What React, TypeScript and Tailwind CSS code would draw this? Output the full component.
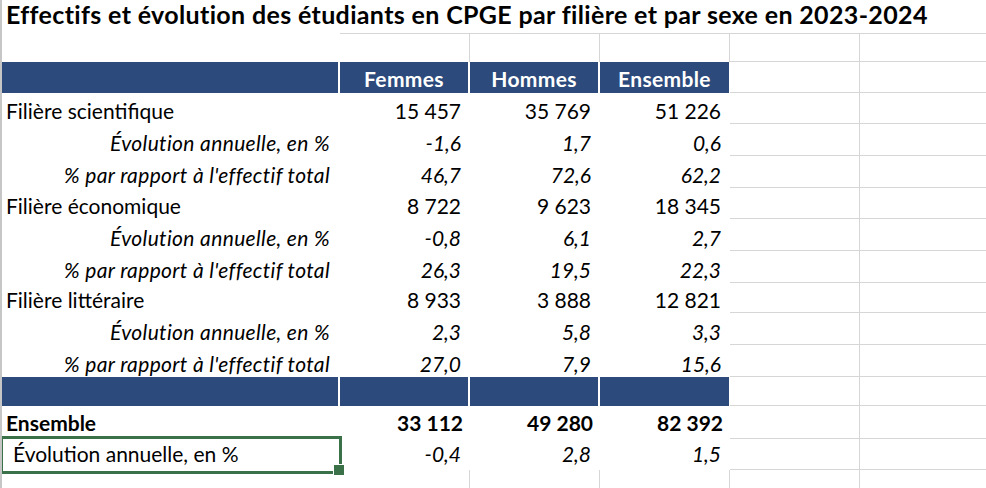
import React from "react";

type Line = {
  label: string;
  kind: "main" | "sub";
  vals: string[];
  h: string;
};

const lines: Line[] = [
  { label: "Filière scientifique", kind: "main", vals: ["15 457", "35 769", "51 226"], h: "h-[31px]" },
  { label: "Évolution annuelle, en %", kind: "sub", vals: ["-1,6", "1,7", "0,6"], h: "h-[32px]" },
  { label: "% par rapport à l'effectif total", kind: "sub", vals: ["46,7", "72,6", "62,2"], h: "h-[32px]" },
  { label: "Filière économique", kind: "main", vals: ["8 722", "9 623", "18 345"], h: "h-[31px]" },
  { label: "Évolution annuelle, en %", kind: "sub", vals: ["-0,8", "6,1", "2,7"], h: "h-[32px]" },
  { label: "% par rapport à l'effectif total", kind: "sub", vals: ["26,3", "19,5", "22,3"], h: "h-[32px]" },
  { label: "Filière littéraire", kind: "main", vals: ["8 933", "3 888", "12 821"], h: "h-[30px]" },
  { label: "Évolution annuelle, en %", kind: "sub", vals: ["2,3", "5,8", "3,3"], h: "h-[32px]" },
  { label: "% par rapport à l'effectif total", kind: "sub", vals: ["27,0", "7,9", "15,6"], h: "h-[32px]" },
];

const numW = ["w-[130px]", "w-[130px]", "w-[130px]"];

// empty sheet columns on the right (E, F)
function Spare({ top = false }: { top?: boolean }): React.JSX.Element {
  return (
    <>
      <div className={`w-[130px] h-full border-b border-r border-[#d6d6d6] ${top ? "border-t" : ""}`}></div>
      <div className={`flex-1 h-full border-b border-[#d6d6d6] ${top ? "border-t" : ""}`}></div>
    </>
  );
}

function BlueRow({ h, heads }: { h: string; heads?: string[] }): React.JSX.Element {
  return (
    <div className={`flex ${h}`}>
      <div className="w-[338px] h-full bg-[#2c4a7b] border-r-2 border-white"></div>
      {numW.map((w, i) => (
        <div
          key={i}
          className={`${w} h-full bg-[#2c4a7b] ${i < 2 ? "border-r-2" : "border-r"} border-white flex items-end justify-center pb-[2px] text-white font-bold leading-[24px] tracking-[0.35px]`}
        >
          {heads ? heads[i] : ""}
        </div>
      ))}
      <Spare />
    </div>
  );
}

export default function App(): React.JSX.Element {
  return (
    <div className="w-[986px] h-[488px] overflow-hidden bg-white border-l-2 border-[#c6c6c6] text-[21px] text-black font-['Lato',sans-serif]">
      {/* Title */}
      <div className="h-[33px] pl-[4px] text-[25px] font-bold leading-[28px] tracking-[0.35px] whitespace-nowrap">
        Effectifs et évolution des étudiants en CPGE par filière et par sexe en 2023-2024
      </div>

      {/* Empty row */}
      <div className="flex h-[29px]">
        <div className="w-[338px] h-full"></div>
        {numW.map((w, i) => (
          <div key={i} className={`${w} h-full border-t border-r border-[#d6d6d6]`}></div>
        ))}
        <Spare top />
      </div>

      <BlueRow h="h-[31px]" heads={["Femmes", "Hommes", "Ensemble"]} />

      {lines.map((l, idx) => (
        <div key={idx} className={`flex ${l.h}`}>
          <div
            className={`w-[338px] h-full flex items-end pb-[1px] leading-[24px] whitespace-nowrap ${
              l.kind === "main" ? "pl-[4px]" : "justify-end pr-[10px] italic tracking-[0.35px]"
            }`}
          >
            {l.label}
          </div>
          {l.vals.map((v, i) => (
            <div
              key={i}
              className={`${numW[i]} h-full flex items-end justify-end pb-[1px] pr-[9px] leading-[24px] ${
                l.kind === "sub" ? "italic" : ""
              }`}
            >
              {v}
            </div>
          ))}
          <Spare />
        </div>
      ))}

      <BlueRow h="h-[29px]" />

      {/* Total */}
      <div className="flex h-[33px] font-bold">
        <div className="w-[338px] h-full flex items-end pb-[4px] pl-[4px] leading-[24px]">Ensemble</div>
        {["33 112", "49 280", "82 392"].map((v, i) => (
          <div key={i} className={`${numW[i]} h-full flex items-end justify-end pb-[4px] pr-[7px] leading-[24px]`}>
            {v}
          </div>
        ))}
        <Spare />
      </div>

      <div className="relative flex h-[31px]">
        <div className="w-[338px] h-full flex items-end pb-[4px] pl-[11px] leading-[24px]">Évolution annuelle, en %</div>
        {["-0,4", "2,8", "1,5"].map((v, i) => (
          <div key={i} className={`${numW[i]} h-full flex items-end justify-end pb-[4px] pr-[9px] leading-[24px] italic`}>
            {v}
          </div>
        ))}
        <Spare />
        {/* selected cell */}
        <div className="absolute left-[-2px] top-[-3px] w-[342px] h-[38px] border-[3px] border-[#3b7149]"></div>
        <div className="absolute left-[331px] top-[25px] w-[12px] h-[12px] bg-[#3b7149] border border-white"></div>
      </div>

      {/* trailing row */}
      <div className="flex h-[18px]">
        <div className="w-[338px] h-full"></div>
        {numW.map((w, i) => (
          <div key={i} className={`${w} h-full border-r border-[#d6d6d6]`}></div>
        ))}
        <div className="w-[130px] h-full border-r border-[#d6d6d6]"></div>
        <div className="flex-1 h-full"></div>
      </div>
    </div>
  );
}
